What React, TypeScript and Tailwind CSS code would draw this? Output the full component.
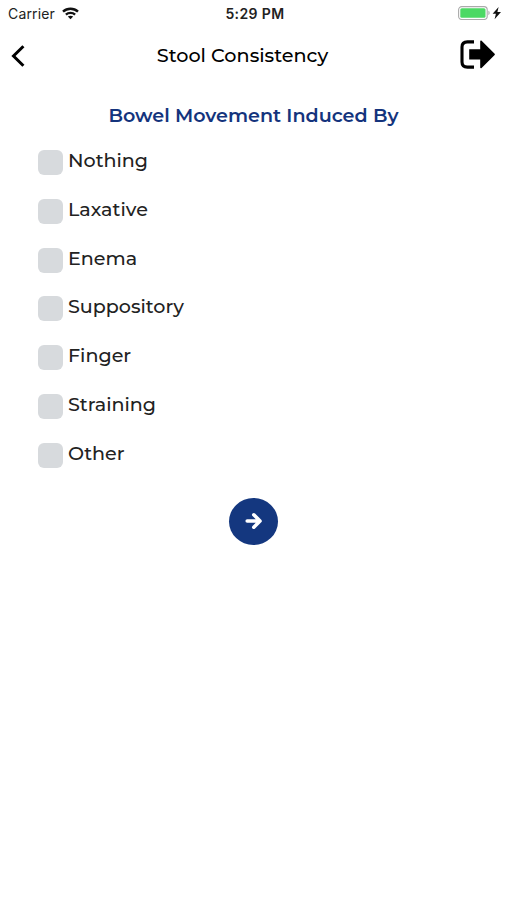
import { useState } from "react";
import clsx from "clsx";

const OPTIONS = [
  { id: "nothing", label: "Nothing" },
  { id: "laxative", label: "Laxative" },
  { id: "enema", label: "Enema" },
  { id: "suppository", label: "Suppository" },
  { id: "finger", label: "Finger" },
  { id: "straining", label: "Straining" },
  { id: "other", label: "Other" },
];

function WifiIcon() {
  return (
    <svg width="17" height="13" viewBox="0 0 17 13" fill="none" stroke="#111" strokeWidth="2.4">
      <path d="M1 4.7C5.2 .7 11.8 .7 16 4.7" />
      <path d="M3.9 7.7C6.5 5.3 10.5 5.3 13.1 7.7" />
      <path d="M8.5 12.2 5.8 9.6C7.3 8.3 9.7 8.3 11.2 9.6Z" fill="#111" stroke="none" />
    </svg>
  );
}

function BatteryIcon() {
  return (
    <svg width="44" height="14" viewBox="0 0 44 14">
      <rect x="0.6" y="0.6" width="28.6" height="12.9" rx="3.2" fill="#fff" stroke="#aaa" strokeWidth="1.1" />
      <rect x="2.3" y="2.3" width="25.2" height="9.5" rx="1.5" fill="#4cd964" />
      <path d="M30.5 4.8v4.4c1.4-.5 1.4-3.9 0-4.4Z" fill="#999" />
      <path d="M40.6 .9 34.6 7.8h3.3l-1.3 5.5L43 5.9h-3.6Z" fill="#111" />
    </svg>
  );
}

function StatusBar() {
  return (
    <div className="grid h-[27px] grid-cols-3 items-center pl-2 pr-[5px] font-['Inter',sans-serif] text-[14px] text-[#222]">
      <div className="flex items-center gap-[7px]">
        <span className="tracking-[0.15px]">Carrier</span>
        <WifiIcon />
      </div>
      <span className="text-center text-[14px] font-semibold tracking-[0.4px]">5:29 PM</span>
      <div className="flex justify-end pb-px">
        <BatteryIcon />
      </div>
    </div>
  );
}

function Header() {
  return (
    <header className="flex h-[57px] items-center justify-between pl-[11px] pr-3">
      <button type="button" aria-label="Back" className="w-[14px]">
        <svg width="14" height="22" viewBox="0 0 14 22" fill="none" stroke="#000" strokeWidth="3">
          <path d="M12.4 1.2 2.5 11l9.9 9.8" />
        </svg>
      </button>
      <h1 className="text-[19.2px] font-medium text-black">Stool Consistency</h1>
      <button type="button" aria-label="Sign out" className="pb-[3px]">
        <svg width="35" height="29" viewBox="0 0 35 29">
          <path
            d="M14 1.9H7.4C3.8 1.9 2 3.6 2 7v15c0 3.4 1.8 5.1 5.4 5.1H14"
            fill="none"
            stroke="#000"
            strokeWidth="3.1"
          />
          <path d="M9.2 9.2h11V1.2c0-.8.8-1 1.4-.5L34.4 13.4c.7.7.7 1.2 0 1.9L21.6 27.9c-.6.5-1.4.3-1.4-.5v-7.8h-11Z" />
        </svg>
      </button>
    </header>
  );
}

export default function App() {
  const [selected, setSelected] = useState<string[]>([]);

  const toggle = (id: string) =>
    setSelected((prev) => (prev.includes(id) ? prev.filter((s) => s !== id) : [...prev, id]));

  return (
    <div className="h-[900px] w-full overflow-hidden bg-white font-['Montserrat','Inter',sans-serif]">
      <StatusBar />
      <Header />
      <main className="flex flex-col pt-[18px]">
        <h2 className="text-center text-[19.1px] font-semibold leading-7 text-[#14347d]">
          Bowel Movement Induced By
        </h2>
        <ul className="mt-2 pl-[37.5px]">
          {OPTIONS.map(({ id, label }) => (
            <li key={id} className="flex h-[48.85px] items-center">
              <button type="button" onClick={() => toggle(id)} className="flex items-center gap-[5.5px]">
                <span
                  className={clsx(
                    "size-[25px] rounded-[6px]",
                    selected.includes(id) ? "bg-[#14347d]" : "bg-[#d7dadd]"
                  )}
                />
                <span className="pb-[3px] text-[19.1px] font-medium leading-6 text-[#222]">{label}</span>
              </button>
            </li>
          ))}
        </ul>
        <button
          type="button"
          aria-label="Next"
          className="mt-[18px] flex h-[47px] w-[49px] items-center justify-center self-center rounded-[50%] bg-[#14377f]"
        >
          <svg width="18" height="18" viewBox="0 0 18 18" fill="none" stroke="#fff" strokeWidth="3.6" strokeLinecap="round">
            <path d="M2.2 9h12M8.8 2.8 15 9l-6.2 6.2" strokeLinejoin="round" />
          </svg>
        </button>
      </main>
    </div>
  );
}
